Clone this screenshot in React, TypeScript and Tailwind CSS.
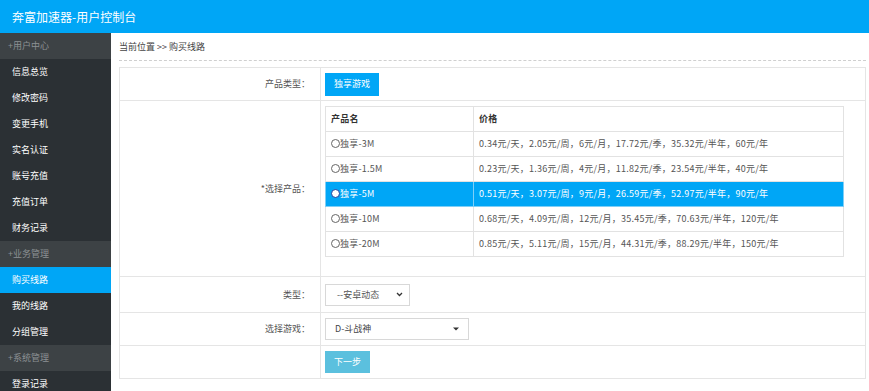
import React from 'react';

const font = { fontFamily: '"Noto Sans CJK SC", "Noto Sans", sans-serif' };

const menu: { title: string; items: string[] }[] = [
  { title: '+用户中心', items: ['信息总览', '修改密码', '变更手机', '实名认证', '账号充值', '充值订单', '财务记录'] },
  { title: '+业务管理', items: ['购买线路', '我的线路', '分组管理'] },
  { title: '+系统管理', items: ['登录记录'] },
];

const products = [
  { name: '独享-3M', price: '0.34元/天，2.05元/周，6元/月，17.72元/季，35.32元/半年，60元/年' },
  { name: '独享-1.5M', price: '0.23元/天，1.36元/周，4元/月，11.82元/季，23.54元/半年，40元/年' },
  { name: '独享-5M', price: '0.51元/天，3.07元/周，9元/月，26.59元/季，52.97元/半年，90元/年' },
  { name: '独享-10M', price: '0.68元/天，4.09元/周，12元/月，35.45元/季，70.63元/半年，120元/年' },
  { name: '独享-20M', price: '0.85元/天，5.11元/周，15元/月，44.31元/季，88.29元/半年，150元/年' },
];

const Sidebar: React.FC = () => (
  <aside className="w-[111px] shrink-0 bg-[#2b3034] text-[9px]">
    {menu.map((g) => (
      <div key={g.title}>
        <div className="h-[26px] leading-[26px] pl-[8px] bg-[#3d4245] text-[#8c9194]">{g.title}</div>
        {g.items.map((it) => (
          <div
            key={it}
            className={
              'h-[26px] leading-[26px] pl-[12px] ' +
              (it === '购买线路' ? 'bg-[#00a6f6] text-white' : 'text-white')
            }
          >
            {it}
          </div>
        ))}
      </div>
    ))}
  </aside>
);

const Radio: React.FC<{ on?: boolean }> = ({ on }) => (
  <span
    className={
      'inline-block w-[9px] h-[9px] rounded-full border align-[-1px] ' +
      (on ? 'border-[#1a3fa0] bg-white' : 'border-[#666] bg-white')
    }
  />
);

export default function App() {
  return (
    <div className="w-[869px] h-[391px] overflow-hidden bg-white text-[#555]" style={font}>
      <header className="h-[33px] bg-[#00a6f6] flex items-center pl-[12px]">
        <h1 className="text-white text-[12px]">奔富加速器-用户控制台</h1>
      </header>
      <div className="flex h-[358px]">
        <Sidebar />
        <main className="flex-1 pl-[8px] pr-[3px]">
          <div className="h-[28px] pt-[8px] leading-[12px] text-[9px] text-[#444] border-b border-dashed border-[#cfcfcf]">
            当前位置 &gt;&gt; 购买线路
          </div>
          <table className="mt-[6px] w-full border-collapse border border-[#e5e5e5] text-[9px]">
            <tbody>
              <tr className="h-[33px]">
                <td className="w-[201px] border border-[#e5e5e5] text-right pr-[10px] text-[#555]">产品类型：</td>
                <td className="border border-[#e5e5e5] pl-[4px]">
                  <span className="inline-flex items-center justify-center w-[54px] h-[23px] bg-[#00a6f6] text-white">
                    独享游戏
                  </span>
                </td>
              </tr>
              <tr className="h-[176px]">
                <td className="border border-[#e5e5e5] text-right pr-[10px] text-[#555]">*选择产品：</td>
                <td className="border border-[#e5e5e5] pl-[4px] pr-[21px] pt-[5px] pb-[19px] align-top">
                  <table className="w-full border-collapse border border-[#e2e2e2] tracking-[0.25px]">
                    <thead>
                      <tr className="h-[25px]">
                        <th className="w-[148px] border border-[#e2e2e2] text-left pl-[5px] font-bold text-[#333]">产品名</th>
                        <th className="border border-[#e2e2e2] text-left pl-[5px] font-bold text-[#333]">价格</th>
                      </tr>
                    </thead>
                    <tbody>
                      {products.map((p) => {
                        const on = p.name === '独享-5M';
                        return (
                          <tr key={p.name} className={'h-[25px] ' + (on ? 'bg-[#00a6f6] text-white' : '')}>
                            <td className={'border pl-[5px] whitespace-nowrap ' + (on ? 'border-[#7fcff7]' : 'border-[#e2e2e2]')}>
                              <Radio on={on} />
                              {p.name}
                            </td>
                            <td className={'border pl-[5px] whitespace-nowrap ' + (on ? 'border-[#7fcff7]' : 'border-[#e2e2e2]')}>{p.price}</td>
                          </tr>
                        );
                      })}
                    </tbody>
                  </table>
                </td>
              </tr>
              <tr className="h-[36px]">
                <td className="border border-[#e5e5e5] text-right pr-[10px] text-[#555]">类型：</td>
                <td className="border border-[#e5e5e5] pl-[4px]">
                  <div className="w-[85px] h-[22px] border border-[#d8d8d8] flex items-center justify-between pl-[11px] pr-[6px] text-[#555]">
                    <span>--安卓动态</span>
                    <svg width="7" height="5" viewBox="0 0 7 5">
                      <path d="M1 1 L3.5 3.5 L6 1" stroke="#333" strokeWidth="1.3" fill="none" />
                    </svg>
                  </div>
                </td>
              </tr>
              <tr className="h-[33px]">
                <td className="border border-[#e5e5e5] text-right pr-[10px] text-[#555]">选择游戏：</td>
                <td className="border border-[#e5e5e5] pl-[4px]">
                  <div className="w-[144px] h-[22px] border border-[#d8d8d8] flex items-center justify-between pl-[9px] pr-[9px] text-[#444]">
                    <span>D-斗战神</span>
                    <svg width="6" height="4" viewBox="0 0 6 4">
                      <path d="M0 0.5 L6 0.5 L3 3.5 Z" fill="#333" />
                    </svg>
                  </div>
                </td>
              </tr>
              <tr className="h-[33px]">
                <td className="border border-[#e5e5e5]"></td>
                <td className="border border-[#e5e5e5] pl-[4px]">
                  <span className="inline-flex items-center justify-center w-[45px] h-[22px] bg-[#5bc0de] text-white">
                    下一步
                  </span>
                </td>
              </tr>
            </tbody>
          </table>
        </main>
      </div>
    </div>
  );
}
